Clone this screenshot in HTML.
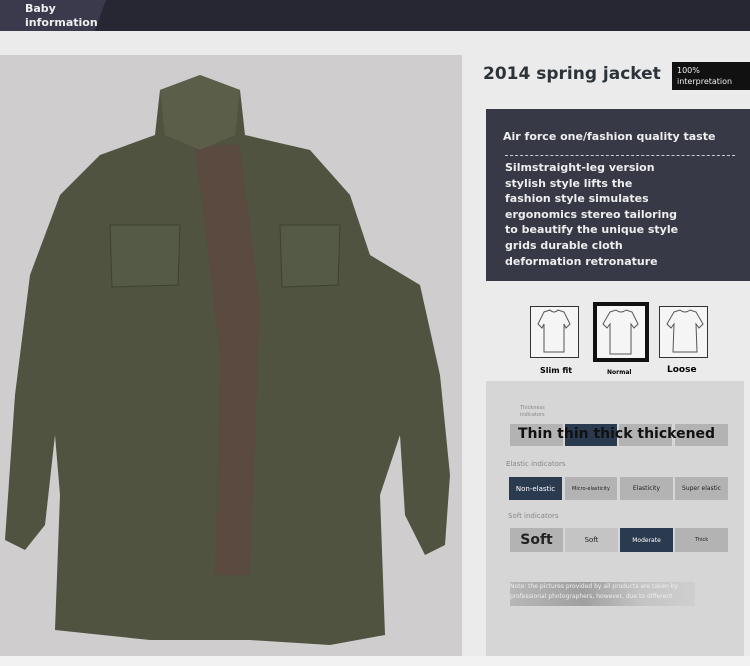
<!DOCTYPE html>
<html><head><meta charset="utf-8"><style>
*{margin:0;padding:0;box-sizing:border-box}
body{width:750px;height:666px;background:#ebebeb;font-family:"DejaVu Sans","Liberation Sans",sans-serif;position:relative;overflow:hidden}
.a{position:absolute}
.box{position:absolute;font-size:7px;color:#222;text-align:center;display:flex;align-items:center;justify-content:center}
.g{background:#b3b3b3}.d{background:#2b3b4f;color:#fff}
</style></head><body>
<div class="a" style="left:0;top:0;width:750px;height:31px;background:#272733"></div>
<div class="a" style="left:0;top:0;width:140px;height:31px;background:linear-gradient(110deg,#3a3a4c 70%,#272733 70%)"></div>
<div class="a" style="left:25px;top:2px;color:#eee;font-size:11px;line-height:14px;font-weight:bold">Baby<br>information</div>
<div class="a" style="left:0;top:55px;width:462px;height:601px;background:#cfcdcd"></div>
<svg class="a" style="left:0;top:55px" width="462" height="601" viewBox="0 0 462 601">
<path d="M160 35 L200 20 L240 35 L245 80 L310 95 L350 140 L370 200 L420 230 L440 320 L450 420 L445 490 L425 500 L405 460 L400 380 L380 440 L385 580 L330 590 L250 585 L150 585 L55 575 L60 440 L55 380 L45 470 L25 495 L5 485 L15 340 L30 220 L60 140 L100 100 L155 80 Z" fill="#4f5340"/>
<path d="M195 90 L240 90 L260 250 L250 520 L215 520 L220 300 Z" fill="#5a4a40"/>
<path d="M160 35 L200 20 L240 35 L235 80 L200 95 L165 80 Z" fill="#5b5f4a"/>
<path d="M110 170 L180 170 L178 230 L112 232 Z M280 170 L340 170 L338 230 L282 232 Z" fill="#555a46" stroke="#3e4132"/>
</svg>
<div class="a" style="left:0;top:656px;width:750px;height:10px;background:#f2f2f2"></div>
<div class="a" style="left:483px;top:64px;font-size:17px;font-weight:bold;color:#2c333a">2014 spring jacket</div>
<div class="a" style="left:672px;top:62px;width:78px;height:28px;background:#111;color:#eee;font-size:8px;padding:3px 5px;line-height:11px">100%<br>interpretation</div>
<div class="a" style="left:486px;top:109px;width:264px;height:172px;background:#383947"></div>
<div class="a" style="left:503px;top:130px;color:#eee;font-size:11px;font-weight:bold">Air force one/fashion quality taste</div>
<div class="a" style="left:505px;top:155px;width:230px;border-top:1px dashed #ccc"></div>
<div class="a" style="left:505px;top:160px;color:#eee;font-size:11px;font-weight:bold;line-height:15.6px">Silmstraight-leg version<br>stylish style lifts the<br>fashion style simulates<br>ergonomics stereo tailoring<br>to beautify the unique style<br>grids durable cloth<br>deformation retronature</div>
<div class="a" style="left:530px;top:306px;width:49px;height:52px;border:1px solid #333;background:#f5f5f5"></div>
<div class="a" style="left:593px;top:302px;width:56px;height:60px;border:4px solid #111;background:#f5f5f5"></div>
<div class="a" style="left:659px;top:306px;width:49px;height:52px;border:1px solid #333;background:#f5f5f5"></div>
<svg class="a" style="left:530px;top:302px" width="180" height="60" fill="none" stroke="#555" stroke-width="1">
<path d="M14 10 L20 8 Q24 12 28 8 L34 10 L40 22 L36 26 L34 22 L34 50 L14 50 L14 22 L12 26 L8 22 Z"/>
<path d="M80 10 L86 8 Q91 12 96 8 L102 10 L108 22 L104 26 L101 22 L101 52 L80 52 L80 22 L77 26 L73 22 Z"/>
<path d="M144 10 L150 8 Q155 12 160 8 L166 10 L173 22 L169 26 L166 22 L167 50 L143 50 L144 22 L141 26 L137 22 Z"/>
</svg>
<div class="a" style="left:540px;top:366px;font-size:8px;font-weight:bold">Slim fit</div>
<div class="a" style="left:607px;top:369px;font-size:6px;font-weight:bold">Normal</div>
<div class="a" style="left:667px;top:365px;font-size:9px;font-weight:bold">Loose</div>
<div class="a" style="left:486px;top:381px;width:258px;height:275px;background:#d6d6d6"></div>
<div class="a" style="left:520px;top:405px;font-size:5px;color:#888;line-height:7px">Thickness<br>indicators</div>
<div class="box g" style="left:510px;top:424px;width:53px;height:22px"></div>
<div class="box" style="left:565px;top:424px;width:52px;height:22px;background:#2b3b4f"></div>
<div class="box g" style="left:619px;top:424px;width:53px;height:22px"></div>
<div class="box g" style="left:675px;top:424px;width:53px;height:22px"></div>
<div class="a" style="left:518px;top:426px;font-size:14px;font-weight:bold;color:#111">Thin thin thick thickened</div>
<div class="a" style="left:506px;top:460px;font-size:7px;color:#888">Elastic indicators</div>
<div class="box d" style="left:509px;top:477px;width:53px;height:23px">Non-elastic</div>
<div class="box g" style="left:565px;top:477px;width:52px;height:23px;font-size:5px">Micro-elasticity</div>
<div class="box g" style="left:620px;top:477px;width:53px;height:23px;font-size:6px">Elasticity</div>
<div class="box g" style="left:675px;top:477px;width:53px;height:23px;font-size:6px">Super elastic</div>
<div class="a" style="left:508px;top:512px;font-size:7px;color:#888">Soft indicators</div>
<div class="box g" style="left:510px;top:528px;width:53px;height:24px;font-size:14px;font-weight:bold">Soft</div>
<div class="box g" style="left:565px;top:528px;width:53px;height:24px;background:#c4c4c4">Soft</div>
<div class="box d" style="left:620px;top:528px;width:53px;height:24px;font-size:6px">Moderate</div>
<div class="box g" style="left:675px;top:528px;width:53px;height:24px;font-size:5px">Thick</div>
<div class="a" style="left:510px;top:582px;width:185px;height:24px;background:linear-gradient(90deg,#aaa,#888 40%,#bbb 70%,#ccc);opacity:.7"></div>
<div class="a" style="left:510px;top:582px;font-size:6px;color:#eee;line-height:10px;width:200px">Note: the pictures provided by all products are taken by professional photographers, however, due to different</div>
</body></html>
